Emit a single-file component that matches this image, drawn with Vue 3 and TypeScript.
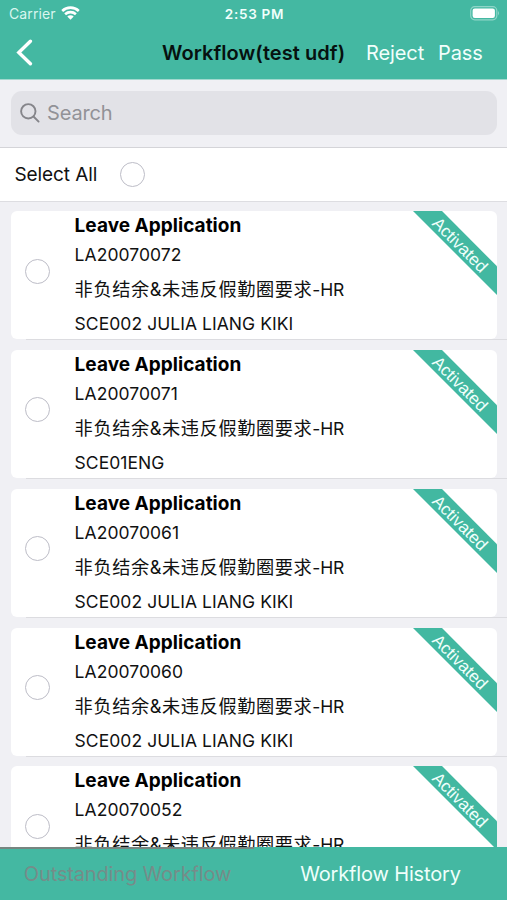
<script setup lang="ts">
import { ref } from 'vue'

interface WorkflowItem {
  id: string
  title: string
  reason: string
  applicant: string
  status: string
}

const reason = '非负结余&未违反假勤圈要求'
const julia = 'SCE002 JULIA LIANG KIKI'

const items: WorkflowItem[] = [
  { id: 'LA20070072', title: 'Leave Application', reason, applicant: julia, status: 'Activated' },
  { id: 'LA20070071', title: 'Leave Application', reason, applicant: 'SCE01ENG', status: 'Activated' },
  { id: 'LA20070061', title: 'Leave Application', reason, applicant: julia, status: 'Activated' },
  { id: 'LA20070060', title: 'Leave Application', reason, applicant: julia, status: 'Activated' },
  { id: 'LA20070052', title: 'Leave Application', reason, applicant: julia, status: 'Activated' },
]

const selected = ref<string[]>([])

function toggle(id: string) {
  selected.value = selected.value.includes(id)
    ? selected.value.filter((s) => s !== id)
    : [...selected.value, id]
}

function toggleAll() {
  selected.value = selected.value.length === items.length ? [] : items.map((i) => i.id)
}
</script>

<template>
  <div class="screen">
    <header class="header">
      <div class="status">
        <div class="carrier">
          <span>Carrier</span>
          <svg class="wifi" width="19" height="14" viewBox="0 0 19 14">
            <path d="M1.2 5 A12 12 0 0 1 17.8 5" />
            <path d="M4.1 8.2 A8 8 0 0 1 14.9 8.2" />
            <path class="dot" d="M9.5 13.8 L6.3 10.6 A4.6 4.6 0 0 1 12.7 10.6 Z" />
          </svg>
        </div>
        <span class="time">2:53 PM</span>
        <svg class="battery" width="30" height="15" viewBox="0 0 30 15">
          <rect class="shell" x="0.7" y="0.7" width="26.1" height="13.1" rx="4" />
          <rect class="charge" x="2.6" y="2.6" width="22.3" height="9.3" rx="2.2" />
          <path class="shell-cap" d="M28 5 Q30 7.2 28 9.5 Z" />
        </svg>
      </div>
      <nav class="nav">
        <svg class="back" width="17" height="27" viewBox="0 0 17 27">
          <path d="M14.4 2.2 L2.8 13.5 L14.4 24.8" />
        </svg>
        <h1 class="title">Workflow(test udf)</h1>
        <span class="action reject">Reject</span>
        <span class="action pass">Pass</span>
      </nav>
    </header>

    <div class="search-bar">
      <div class="search-field">
        <svg width="20" height="20" viewBox="0 0 20 20">
          <circle cx="8.3" cy="8.3" r="7.2" />
          <path d="M13.5 13.5 L18.6 18.6" />
        </svg>
        <span>Search</span>
      </div>
    </div>

    <div class="select-all">
      <span class="select-label">Select All</span>
      <span class="radio" :class="{ on: selected.length === items.length }" @click="toggleAll"></span>
    </div>

    <main class="list">
      <article v-for="item in items" :key="item.id" class="row">
        <div class="card" @click="toggle(item.id)">
          <span class="radio" :class="{ on: selected.includes(item.id) }"></span>
          <div class="details">
            <h2>{{ item.title }}</h2>
            <p class="number">{{ item.id }}</p>
            <p class="reason">{{ item.reason }}<span class="suffix">-HR</span></p>
            <p class="applicant">{{ item.applicant }}</p>
          </div>
          <svg class="ribbon" width="84" height="84" viewBox="0 0 84 84">
            <path d="M0 0 H29 L84 55.3 V84 Z" />
            <text transform="translate(45.2 35.6) rotate(45)" text-anchor="middle" y="3.2">{{ item.status }}</text>
          </svg>
        </div>
      </article>
    </main>

    <footer class="tabs">
      <div class="tab current"><span>Outstanding Workflow</span></div>
      <div class="tab"><span>Workflow History</span></div>
    </footer>
  </div>
</template>

<style>
body {
  margin: 0;
}
</style>

<style scoped>
.screen {
  display: flex;
  flex-direction: column;
  box-sizing: border-box;
  width: 507px;
  height: 900px;
  overflow: hidden;
  background: #f0f0f4;
  color: #111;
  font-family: Inter, "Noto Sans CJK SC", sans-serif;
  font-feature-settings: "calt" 0;
}

.header {
  flex: none;
  height: 79px;
  border-bottom: 1px solid #a3d9cf;
  background: #44b8a2;
  color: #f1fffc;
}

.status {
  display: grid;
  grid-template-columns: 1fr auto 1fr;
  align-items: center;
  height: 27px;
  padding: 0 7px 0 9px;
}

.carrier {
  display: flex;
  align-items: center;
  gap: 5px;
  font-size: 14px;
  line-height: 27px;
  letter-spacing: 0.1px;
  color: #d9f6ef;
}

.wifi {
  margin-top: -2px;
  fill: none;
  stroke: #fff;
  stroke-width: 2.6;
}

.wifi .dot {
  fill: #fff;
  stroke: none;
}

.time {
  font-size: 13.5px;
  font-weight: 600;
  letter-spacing: 0.7px;
}

.battery {
  justify-self: end;
}

.shell {
  fill: none;
  stroke: #8fd5c8;
  stroke-width: 1.2;
}

.charge {
  fill: #fff;
}

.shell-cap {
  fill: #8fd5c8;
}

.nav {
  display: flex;
  align-items: center;
  height: 50px;
  padding-left: 16px;
}

.back {
  fill: none;
  stroke: #fff;
  stroke-width: 3.4;
  stroke-linecap: round;
}

.title {
  width: 184px;
  margin: 1px 0 0 129px;
  font-size: 20px;
  font-weight: 600;
  letter-spacing: 0.06px;
  white-space: nowrap;
  color: #06110f;
}

.action {
  margin-top: 1px;
  font-size: 20px;
  letter-spacing: -0.1px;
  white-space: nowrap;
}

.reject {
  width: 59px;
  margin-left: 20px;
}

.pass {
  margin-left: 13px;
}

.search-bar {
  flex: none;
  box-sizing: border-box;
  height: 68px;
  padding: 11px 10px 0 11px;
  border-bottom: 1px solid #d4d4d8;
}

.search-field {
  display: flex;
  align-items: center;
  gap: 7px;
  height: 44px;
  padding-left: 9px;
  border-radius: 11px;
  background: #e2e2e7;
  color: #929297;
  font-size: 20px;
  letter-spacing: -0.15px;
}

.search-field svg {
  fill: none;
  stroke: #85858a;
  stroke-width: 1.9;
  stroke-linecap: round;
}

.select-all {
  flex: none;
  display: flex;
  align-items: center;
  box-sizing: border-box;
  height: 54px;
  padding-left: 14.5px;
  border-bottom: 1px solid #dddde1;
  background: #fff;
  font-size: 19px;
  letter-spacing: -0.1px;
}

.select-label {
  width: 105px;
  white-space: nowrap;
}

.radio {
  flex: none;
  box-sizing: border-box;
  width: 25px;
  height: 25px;
  border: 1.5px solid #bdbdc7;
  border-radius: 50%;
  background: #fff;
}

.radio.on {
  border-color: #44b8a2;
  background: #44b8a2;
}

.list {
  flex: 1;
  min-height: 0;
  overflow: hidden;
  padding-top: 9.3px;
}

.row {
  box-sizing: border-box;
  height: 138.8px;
  padding: 0 10px 0 11px;
  background: linear-gradient(#dcdce0, #dcdce0) 26px 128px / 100% 1px no-repeat;
}

.card {
  position: relative;
  display: flex;
  align-items: center;
  box-sizing: border-box;
  height: 128px;
  padding: 0 0 8.4px 14px;
  overflow: hidden;
  border-radius: 6px;
  background: #fff;
}

.details {
  align-self: flex-start;
  margin-left: 24.6px;
  white-space: nowrap;
}

.details h2,
.details p {
  margin: 0;
}

.details h2 {
  height: 29px;
  line-height: 29px;
  font-size: 19px;
  font-weight: 700;
  letter-spacing: 0.03px;
  color: #000;
}

.details p {
  font-size: 17.5px;
  letter-spacing: 0.05px;
}

.details .number {
  height: 30px;
  line-height: 30px;
}

.details .reason {
  height: 38px;
  line-height: 39px;
  font-size: 18.2px;
  letter-spacing: 0.6px;
}

.details .suffix {
  font-size: 17.5px;
  letter-spacing: -0.2px;
}

.details .applicant {
  height: 30px;
  line-height: 31px;
}

.ribbon {
  position: absolute;
  top: 0;
  right: 0;
}

.ribbon path {
  fill: #42b8a1;
}

.ribbon text {
  fill: #effffb;
  font-family: "Liberation Sans", sans-serif;
  font-size: 17px;
}

.tabs {
  flex: none;
  display: flex;
  height: 53px;
  background: #44b8a2;
  font-size: 20px;
  letter-spacing: -0.15px;
}

.tab {
  flex: 1;
  display: flex;
  align-items: center;
  justify-content: center;
  box-sizing: border-box;
  padding-bottom: 2px;
  border-top: 2px solid #44b8a2;
  color: #effffb;
  white-space: nowrap;
}

.tab.current {
  padding-left: 1px;
  border-top-color: #778580;
  color: #768c89;
}
</style>
